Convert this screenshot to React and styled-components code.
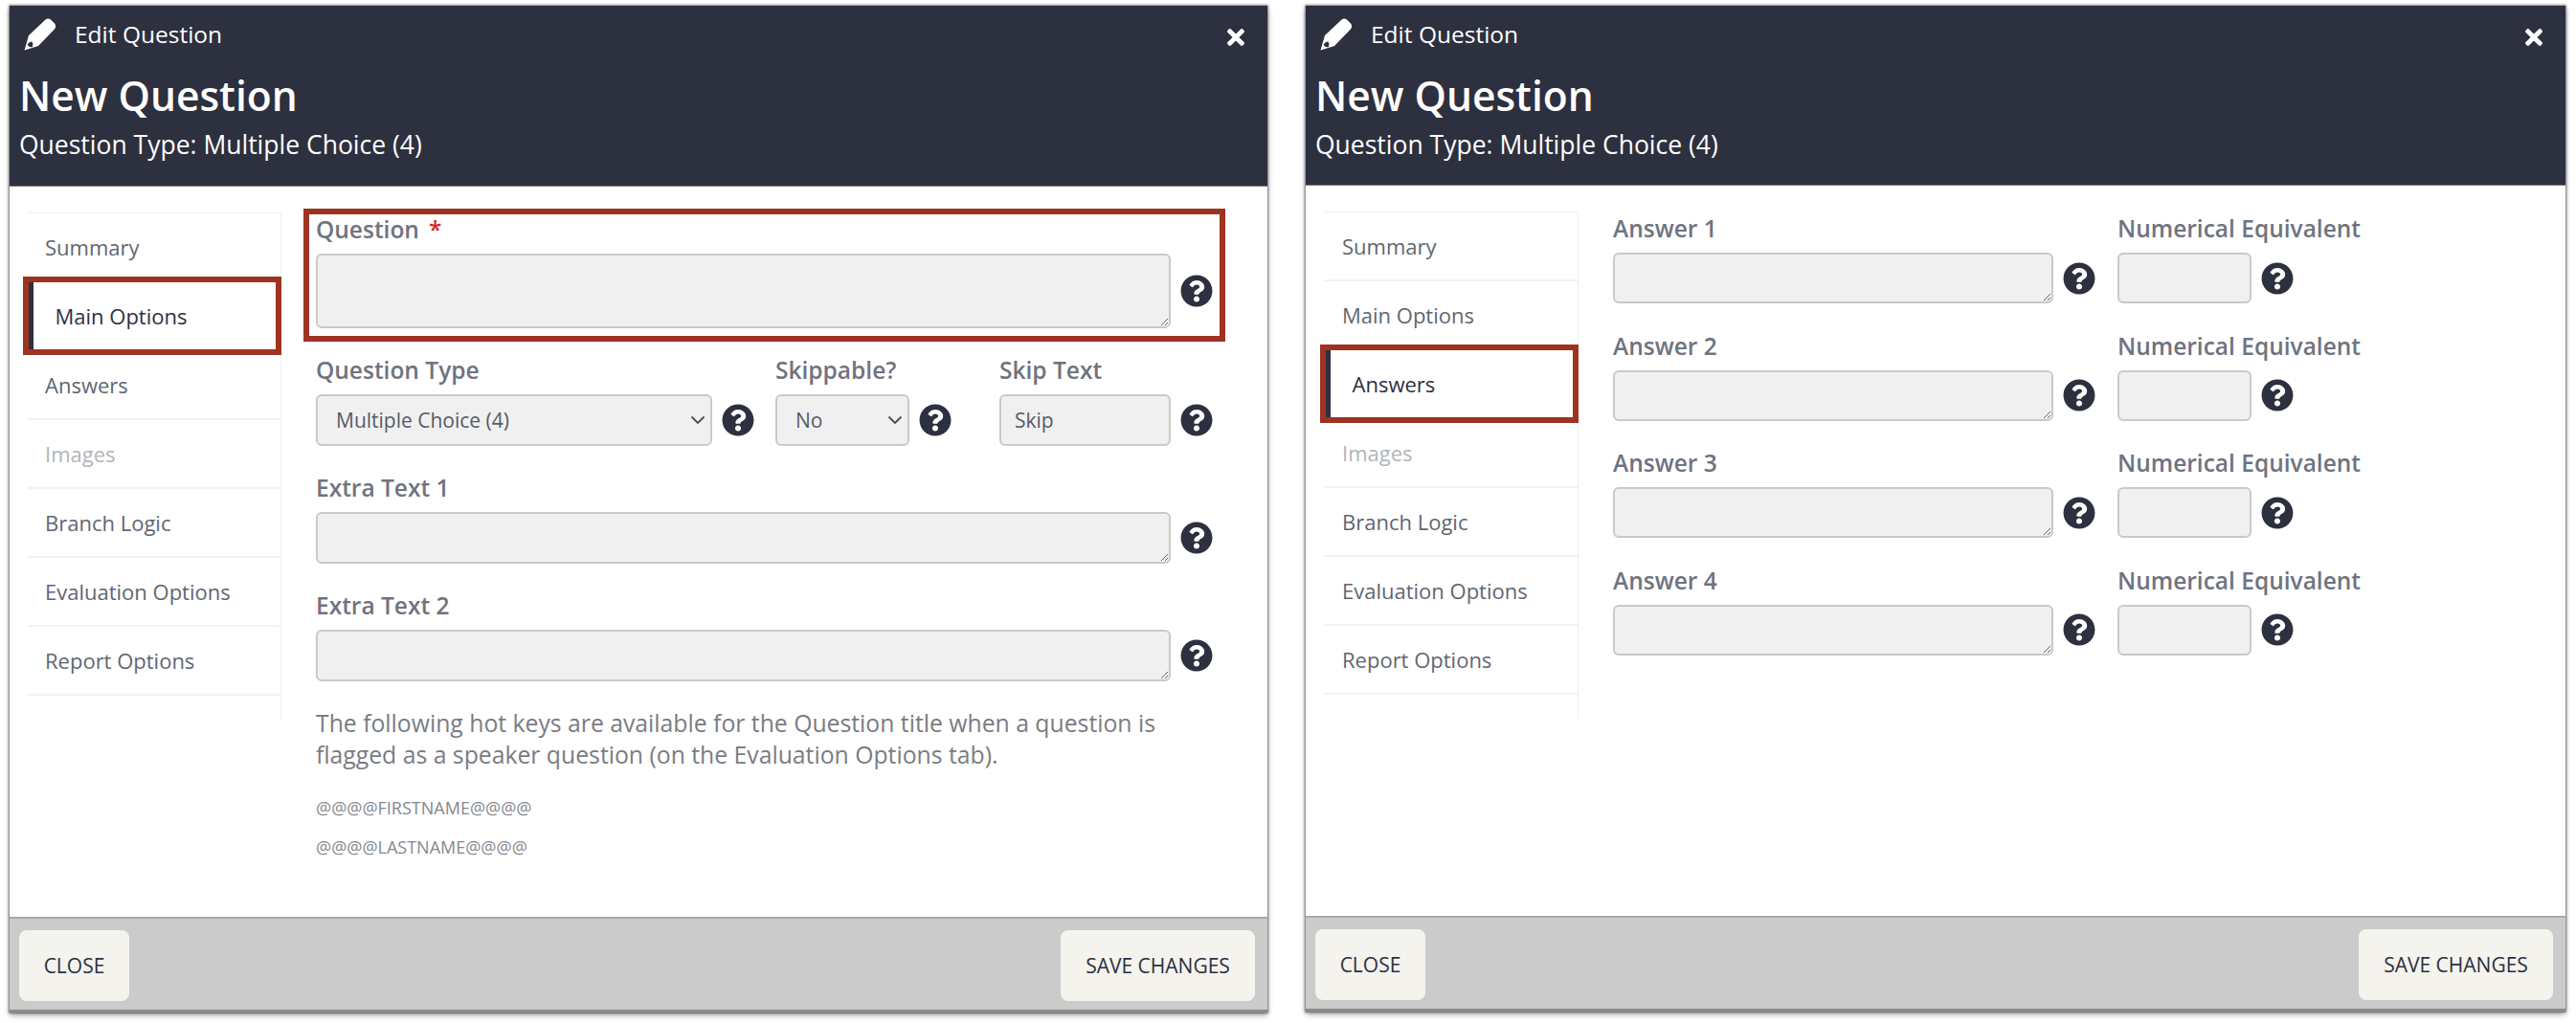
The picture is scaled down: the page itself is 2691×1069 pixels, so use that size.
import React from 'react';
import styled, { createGlobalStyle } from 'styled-components';
import { FaQuestionCircle, FaTimes } from 'react-icons/fa';

const GlobalStyle = createGlobalStyle`
  html, body {
    margin: 0;
    background: #fff;
    font-family: "Open Sans", "Liberation Sans", sans-serif;
  }
  * { box-sizing: border-box; }
`;

const Page = styled.div`
  display: flex;
  gap: 40px;
  width: 2691px;
  height: 1069px;
  padding: 6px 0 0 10px;
  overflow: hidden;
`;

const Modal = styled.section`
  display: flex;
  flex-direction: column;
  width: ${p => p.$width}px;
  height: ${p => p.$height}px;
  background: #fff;
  box-shadow: 0 0 2px 1px rgba(0, 0, 0, 0.45), 0 3px 6px rgba(0, 0, 0, 0.35);
`;

const Header = styled.header`
  position: relative;
  height: ${p => p.$height}px;
  flex: none;
  padding: 14px 11px 0 10px;
  background: #2d303e;
  color: #fff;
  border-bottom: 1px solid #777;
`;

const TitleRow = styled.div`
  display: flex;
  align-items: center;
  height: 30px;
  padding-left: 5px;
  gap: 19px;
  font-size: 24.5px;
`;

const CloseButton = styled.span`
  position: absolute;
  top: 20px;
  right: 20px;
  display: flex;
`;

const Heading = styled.h1`
  margin: 25px 0 0;
  font-size: 42.5px;
  line-height: 50px;
  font-weight: 600;
`;

const SubHeading = styled.div`
  margin-top: 9px;
  font-size: 26.5px;
  line-height: 34px;
`;

const Body = styled.div`
  flex: 1;
  display: flex;
  align-items: flex-start;
  padding-left: ${p => p.$inset}px;
`;

const Sidebar = styled.nav`
  flex: none;
  width: 265px;
  margin-top: 27px;
  padding-bottom: 26px;
  border-top: 1px solid #eef0f3;
  border-right: 1px solid #eef0f3;
`;

const NavItem = styled.div`
  position: relative;
  display: flex;
  align-items: center;
  height: 72px;
  padding-left: ${p => (p.$active ? 22.5 : 18)}px;
  padding-bottom: 1px;
  border-left: ${p => (p.$active ? '6px solid #2d303e' : '0')};
  border-bottom: 2px solid #eff2f6;
  font-size: 22px;
  color: ${p => (p.$active ? '#2d303e' : p.$disabled ? '#b1b4ba' : '#5f6672')};
`;

const NavHighlight = styled.span`
  position: absolute;
  top: -6px;
  bottom: -6px;
  left: -11px;
  right: -1px;
  border: 6px solid #9e3322;
  pointer-events: none;
`;

const Main = styled.div`
  flex: none;
  width: ${p => p.$width}px;
  margin-left: 36px;
  padding-top: 31px;
`;

const FieldGroup = styled.div`
  position: relative;
  display: grid;
  grid-template-columns: ${p => p.$columns || '1fr'};
  margin-bottom: ${p => p.$gap || 30}px;
`;

const FieldHighlight = styled.span`
  position: absolute;
  top: -8px;
  bottom: -14px;
  left: -13px;
  right: -13px;
  border: 6px solid #9e3322;
  pointer-events: none;
`;

const Field = styled.div`
  display: flex;
  flex-direction: column;
  min-width: 0;
  padding-right: ${p => p.$pad || 0}px;
`;

const Label = styled.label`
  display: block;
  height: 30px;
  margin-bottom: 9px;
  font-size: 24.5px;
  line-height: 28px;
  font-weight: 600;
  white-space: nowrap;
  color: #6f7380;
`;

const Required = styled.span`
  margin-left: 10px;
  color: #d8232a;
`;

const ControlRow = styled.div`
  display: flex;
  align-items: center;
  gap: 10px;
`;

const controlStyles = `
  flex: 1;
  width: 100%;
  min-width: 0;
  display: block;
  margin: 0;
  background: #f0f0f0;
  border: 2px solid #c9c9c9;
  border-radius: 6px;
  font-family: inherit;
  font-size: 21px;
  color: #565a66;
`;

const TextArea = styled.textarea`
  ${controlStyles}
  height: ${p => p.$height}px;
`;

const SelectWrap = styled.div`
  position: relative;
  flex: 1;
  min-width: 0;
`;

const Select = styled.select`
  ${controlStyles}
  appearance: none;
  height: 54px;
  padding: 0 30px 0 19px;
`;

const SelectArrow = styled.svg`
  position: absolute;
  top: 22px;
  right: 7px;
  width: 16px;
  height: 10px;
  pointer-events: none;
`;

const Input = styled.input`
  ${controlStyles}
  height: ${p => p.$height}px;
  padding: 0 14px;
`;

const HelpIcon = styled(FaQuestionCircle)`
  flex: none;
  width: 34px;
  height: 34px;
  color: #2d303e;
`;

const Note = styled.p`
  max-width: 900px;
  margin: -3px 0 0;
  font-size: 24.75px;
  line-height: 33px;
  color: #7a7c83;
`;

const HotKey = styled.div`
  margin-top: 28px;
  font-size: 18px;
  line-height: 22px;
  color: #85878e;
  & + & { margin-top: 19px; }
`;

const Footer = styled.footer`
  flex: none;
  display: flex;
  justify-content: space-between;
  align-items: center;
  height: 100px;
  padding: 3px 13px 0 10px;
  background: #cbcbcb;
  border-top: 2px solid #a9a9a9;
  border-bottom: 3px solid #8c8c8c;
`;

const FooterButton = styled.button`
  height: 74px;
  width: ${p => p.$width}px;
  border: 0;
  border-radius: 8px;
  background: #f4f3ee;
  font-family: inherit;
  font-size: 21px;
  color: #2d303e;
`;

const PencilIcon = () => (
  <svg width="34" height="35" viewBox="0 0 34 35">
    <path
      fill="#fff"
      d="M0.5 34.5 L5 19 L22 3 Q25 0.5 28 2.5 L32 6.5 Q34.5 10 31.5 13 L15 30 Z"
    />
    <path fill="#2d303e" d="M3.6 29 Q5 25.5 8.5 25.5 Q10 28 9 31 Q6 32 3.6 29 Z" />
  </svg>
);

const SelectBox = ({ value, options }) => (
  <SelectWrap>
    <Select defaultValue={value}>
      {options.map(option => <option key={option}>{option}</option>)}
    </Select>
    <SelectArrow viewBox="0 0 16 10">
      <path d="M1.5 1.5 L8 8 L14.5 1.5" fill="none" stroke="#4a4a4a" strokeWidth="1.8" />
    </SelectArrow>
  </SelectWrap>
);

const navItems = ['Summary', 'Main Options', 'Answers', 'Images', 'Branch Logic', 'Evaluation Options', 'Report Options'];

const SideNav = ({ active }) => (
  <Sidebar>
    {navItems.map(item => (
      <NavItem key={item} $active={item === active} $disabled={item === 'Images'}>
        {item}
        {item === active && <NavHighlight />}
      </NavItem>
    ))}
  </Sidebar>
);

const EditModal = ({ width, height, headerHeight, inset, active, children }) => (
  <Modal $width={width} $height={height}>
    <Header $height={headerHeight}>
      <TitleRow>
        <PencilIcon />
        Edit Question
      </TitleRow>
      <CloseButton>
        <FaTimes size={26} color="#fff" />
      </CloseButton>
      <Heading>New Question</Heading>
      <SubHeading>Question Type: Multiple Choice (4)</SubHeading>
    </Header>
    <Body $inset={inset}>
      <SideNav active={active} />
      {children}
    </Body>
    <Footer>
      <FooterButton $width={115}>CLOSE</FooterButton>
      <FooterButton $width={203}>SAVE CHANGES</FooterButton>
    </Footer>
  </Modal>
);

const App = () => (
  <Page>
    <GlobalStyle />
    <EditModal width={1314} height={1052} headerHeight={189} inset={19} active="Main Options">
      <Main $width={937}>
        <FieldGroup>
          <FieldHighlight />
          <Field>
            <Label>Question<Required>*</Required></Label>
            <ControlRow>
              <TextArea $height={78} />
              <HelpIcon />
            </ControlRow>
          </Field>
        </FieldGroup>
        <FieldGroup $columns="480px 234px 223px">
          <Field $pad={22}>
            <Label>Question Type</Label>
            <ControlRow>
              <SelectBox value="Multiple Choice (4)" options={['Multiple Choice (4)']} />
              <HelpIcon />
            </ControlRow>
          </Field>
          <Field $pad={50}>
            <Label>Skippable?</Label>
            <ControlRow>
              <SelectBox value="No" options={['No', 'Yes']} />
              <HelpIcon />
            </ControlRow>
          </Field>
          <Field>
            <Label>Skip Text</Label>
            <ControlRow>
              <Input $height={54} defaultValue="Skip" />
              <HelpIcon />
            </ControlRow>
          </Field>
        </FieldGroup>
        <FieldGroup>
          <Field>
            <Label>Extra Text 1</Label>
            <ControlRow>
              <TextArea $height={54} />
              <HelpIcon />
            </ControlRow>
          </Field>
        </FieldGroup>
        <FieldGroup>
          <Field>
            <Label>Extra Text 2</Label>
            <ControlRow>
              <TextArea $height={54} />
              <HelpIcon />
            </ControlRow>
          </Field>
        </FieldGroup>
        <Note>
          The following hot keys are available for the Question title when a question is
          flagged as a speaker question (on the Evaluation Options tab).
        </Note>
        <HotKey>@@@@FIRSTNAME@@@@</HotKey>
        <HotKey>@@@@LASTNAME@@@@</HotKey>
      </Main>
    </EditModal>
    <EditModal width={1316} height={1051} headerHeight={188} inset={20} active="Answers">
      <Main $width={711}>
        {[1, 2, 3, 4].map(n => (
          <FieldGroup key={n} $columns="527px 184px" $gap={30.5}>
            <Field $pad={23}>
              <Label>Answer {n}</Label>
              <ControlRow>
                <TextArea $height={53} />
                <HelpIcon />
              </ControlRow>
            </Field>
            <Field>
              <Label>Numerical Equivalent</Label>
              <ControlRow>
                <Input $height={53} />
                <HelpIcon />
              </ControlRow>
            </Field>
          </FieldGroup>
        ))}
      </Main>
    </EditModal>
  </Page>
);

export default App;
